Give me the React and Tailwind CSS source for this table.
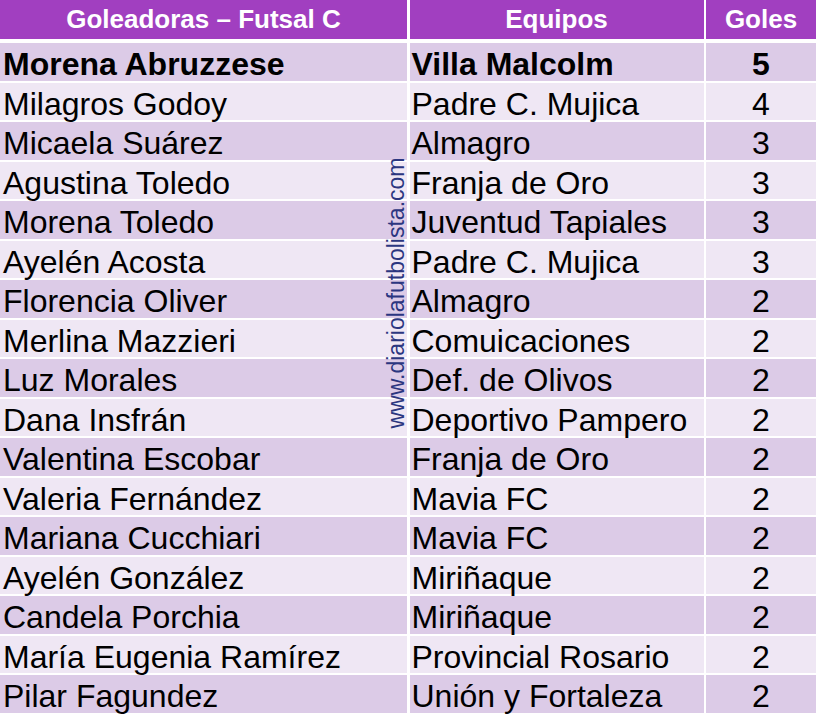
import React from "react";

const rows = [
  ["Morena Abruzzese", "Villa Malcolm", "5"],
  ["Milagros Godoy", "Padre C. Mujica", "4"],
  ["Micaela Suárez", "Almagro", "3"],
  ["Agustina Toledo", "Franja de Oro", "3"],
  ["Morena Toledo", "Juventud Tapiales", "3"],
  ["Ayelén Acosta", "Padre C. Mujica", "3"],
  ["Florencia Oliver", "Almagro", "2"],
  ["Merlina Mazzieri", "Comuicaciones", "2"],
  ["Luz Morales", "Def. de Olivos", "2"],
  ["Dana Insfrán", "Deportivo Pampero", "2"],
  ["Valentina Escobar", "Franja de Oro", "2"],
  ["Valeria Fernández", "Mavia FC", "2"],
  ["Mariana Cucchiari", "Mavia FC", "2"],
  ["Ayelén González", "Miriñaque", "2"],
  ["Candela Porchia", "Miriñaque", "2"],
  ["María Eugenia Ramírez", "Provincial Rosario", "2"],
  ["Pilar Fagundez", "Unión y Fortaleza", "2"],
];

const App = () => {
  return (
    <div className="relative w-[817px] h-[714px] bg-white [font-family:'Liberation_Sans',Arial,sans-serif] text-black overflow-hidden">
      {/* header */}
      <div className="grid grid-cols-[407px_294px_110px] gap-x-[2.5px] h-[39px] text-white font-bold text-[26px]">
        <div className="bg-[#a13fc0] flex items-center justify-center">Goleadoras – Futsal C</div>
        <div className="bg-[#a13fc0] flex items-center justify-center">Equipos</div>
        <div className="bg-[#a13fc0] flex items-center justify-center">Goles</div>
      </div>

      {/* body */}
      <div className="mt-[4px] flex flex-col gap-y-[2px]">
        {rows.map(([name, team, goals], i) => {
          const bg = i % 2 === 0 ? "bg-[#dccbe7]" : "bg-[#efe7f4]";
          const weight = i === 0 ? "font-bold" : "font-normal";
          return (
            <div
              key={i}
              className={`grid grid-cols-[407px_294px_110px] gap-x-[2.5px] h-[37.5px] text-[32px] leading-none ${weight}`}
            >
              <div className={`${bg} flex items-center pt-[5px] pl-[3px] whitespace-nowrap`}>{name}</div>
              <div className={`${bg} flex items-center pt-[5px] pl-[2px] whitespace-nowrap`}>{team}</div>
              <div className={`${bg} flex items-center justify-center pt-[5px]`}>{goals}</div>
            </div>
          );
        })}
      </div>

      {/* watermark */}
      <div className="absolute left-[396px] top-[293px] -translate-x-1/2 -translate-y-1/2 -rotate-90 whitespace-nowrap text-[23px] leading-none text-[#2b3680]">
        www.diariolafutbolista.com
      </div>
    </div>
  );
};

export default App;
